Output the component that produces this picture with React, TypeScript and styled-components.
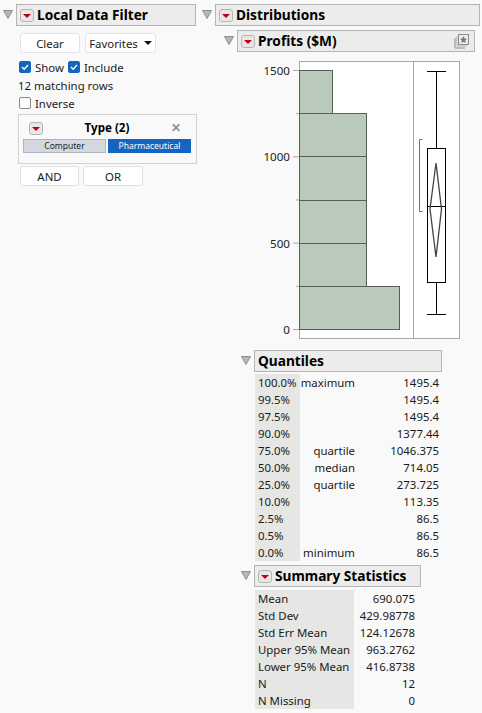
import { Fragment } from 'react';
import styled, { createGlobalStyle } from 'styled-components';

const GlobalStyle = createGlobalStyle`
    html, body {
        margin: 0;
        padding: 0;
        background: #f9f9f9;
    }
    body {
        font-family: "Noto Sans", "Open Sans", sans-serif;
        font-size: 11.4px;
        color: #1a1a1a;
    }
`;

const quantiles = [
    ['100.0%', 'maximum', '1495.4'],
    ['99.5%', '', '1495.4'],
    ['97.5%', '', '1495.4'],
    ['90.0%', '', '1377.44'],
    ['75.0%', 'quartile', '1046.375'],
    ['50.0%', 'median', '714.05'],
    ['25.0%', 'quartile', '273.725'],
    ['10.0%', '', '113.35'],
    ['2.5%', '', '86.5'],
    ['0.5%', '', '86.5'],
    ['0.0%', 'minimum', '86.5'],
];

const summary = [
    ['Mean', '690.075'],
    ['Std Dev', '429.98778'],
    ['Std Err Mean', '124.12678'],
    ['Upper 95% Mean', '963.2762'],
    ['Lower 95% Mean', '416.8738'],
    ['N', '12'],
    ['N Missing', '0'],
];

const Page = styled.div`
    display: flex;
    width: 482px;
    height: 713px;
    overflow: hidden;
    padding-top: 4px;
    box-sizing: border-box;
`;

const LeftColumn = styled.div`
    width: 202px;
    padding-left: 3px;
    box-sizing: border-box;
    flex: none;
`;

const RightColumn = styled.div`
    flex: 1;
    min-width: 0;
`;

const OutlineRow = styled.div<{ $indent?: number; $width: number }>`
    display: flex;
    align-items: flex-start;
    gap: 3px;
    margin-left: ${props => props.$indent || 0}px;
    width: ${props => props.$width}px;
    height: 22px;
`;

const Header = styled.div`
    flex: 1;
    height: 100%;
    display: flex;
    align-items: center;
    gap: 3px;
    padding: 0 4px 2px 3px;
    box-sizing: border-box;
    background: #ececec;
    border: 1px solid #b4b4b4;
    font-size: 13.7px;
    font-weight: 700;
    color: #000;
    white-space: nowrap;
`;

const HeaderTitle = styled.span`
    flex: 1;
`;

const Disclosure = () => (
    <svg width="10" height="9" viewBox="0 0 10 9" style={{ marginTop: 6, flex: 'none' }}>
        <path d="M0.5 0.5H9.5L5 8.5Z" fill="#b8b8b8" stroke="#8e8e8e" />
    </svg>
);

const RedMenu = () => (
    <svg width="14" height="13" viewBox="0 0 14 13" style={{ flex: 'none', marginTop: 2 }}>
        <rect x="0.5" y="0.5" width="13" height="12" rx="2.5" fill="#ebe6e6" stroke="#b9b4b4" />
        <path d="M3 5H11L7 9Z" fill="#c00018" />
    </svg>
);

const StarBadge = () => (
    <svg width="16" height="16" viewBox="0 0 16 16" style={{ marginTop: 2 }}>
        <path d="M1 5V15H11" fill="none" stroke="#8c8c8c" strokeWidth="1" />
        <path d="M3 3V13H13" fill="none" stroke="#b5b5b5" strokeWidth="1" />
        <rect x="4.5" y="1.5" width="10" height="10" fill="#ececec" stroke="#8c8c8c" />
        <path d="M9.5 3L10.6 5.5L13 5.8L11.2 7.5L11.7 10L9.5 8.7L7.3 10L7.8 7.5L6 5.8L8.4 5.5Z" fill="#777" />
    </svg>
);

const FilterBody = styled.div`
    padding: 7px 0 0 15px;
`;

const ButtonRow = styled.div<{ $gap: number; $left: number }>`
    display: flex;
    gap: ${props => props.$gap}px;
    margin-left: ${props => props.$left}px;
`;

const Button = styled.button<{ $width: number }>`
    width: ${props => props.$width}px;
    height: 20px;
    padding: 0;
    display: flex;
    align-items: center;
    justify-content: center;
    gap: 6px;
    font: inherit;
    color: #1a1a1a;
    background: #fff;
    border: 1px solid #e2e2e2;
    border-radius: 3px;
`;

const Caret = styled.span`
    width: 0;
    height: 0;
    border-left: 4px solid transparent;
    border-right: 4px solid transparent;
    border-top: 4px solid #111;
`;

const CheckRow = styled.div`
    display: flex;
    align-items: center;
    height: 18px;
    margin: 5px 0 0 1px;
`;

const CheckLabel = styled.span`
    margin: 0 4px 0 4px;
`;

const Box = styled.span<{ $checked?: boolean }>`
    width: 12px;
    height: 12px;
    box-sizing: border-box;
    display: inline-flex;
    align-items: center;
    justify-content: center;
    border-radius: 2px;
    background: ${props => (props.$checked ? '#1565c0' : '#fbfbfb')};
    border: 1px solid ${props => (props.$checked ? '#1565c0' : '#8a8a8a')};
`;

const Check = () => (
    <svg width="10" height="10" viewBox="0 0 10 10">
        <path d="M2 5L4.2 7.2L8 3" fill="none" stroke="#fff" strokeWidth="1.3" />
    </svg>
);

const MatchRows = styled.div`
    height: 18px;
    line-height: 18px;
    margin-top: 1px;
`;

const InverseRow = styled(CheckRow)`
    margin-top: -1px;
`;

const TypePanel = styled.div`
    width: 179px;
    height: 50px;
    margin-top: 2px;
    box-sizing: border-box;
    border: 1px solid #d2d2d2;
    padding: 5px 5px 0 4px;
`;

const TypeHead = styled.div`
    display: flex;
    align-items: center;
    padding-left: 6px;
    height: 14px;
`;

const TypeTitle = styled.span`
    flex: 1;
    text-align: center;
    font-weight: 700;
    font-size: 11.6px;
    color: #000;
`;

const Close = styled.span`
    width: 20px;
    font-size: 12px;
    font-weight: 700;
    color: #909090;
`;

const Levels = styled.div`
    display: flex;
    gap: 2px;
    margin-top: 5px;
`;

const Level = styled.div<{ $selected?: boolean }>`
    flex: 1;
    height: 14px;
    line-height: 12px;
    box-sizing: border-box;
    text-align: center;
    font-size: 8.5px;
    color: ${props => (props.$selected ? '#fff' : '#222')};
    background: ${props => (props.$selected ? '#1565c0' : '#d3d8e0')};
    border: 1px solid ${props => (props.$selected ? '#1565c0' : '#b0b5bd')};
`;

const LogicRow = styled(ButtonRow)`
    margin-top: 2px;
`;

const PlotFrame = styled.div`
    margin: 6px 0 0 42px;
`;

const Section = styled.div`
    margin-left: 39px;
`;

const Rows = styled.div<{ $columns: string; $top: number }>`
    display: grid;
    grid-template-columns: ${props => props.$columns};
    grid-auto-rows: 17px;
    line-height: 17px;
    margin: ${props => props.$top}px 0 0 14px;
    white-space: nowrap;
`;

const LabelCell = styled.div`
    background: #e6e6e4;
    padding-left: 3px;
`;

const MidCell = styled.div`
    text-align: right;
`;

const ValueCell = styled.div`
    text-align: right;
`;

const QuantileHead = styled(OutlineRow)`
    margin-top: 7px;
`;

const SummaryHead = styled(OutlineRow)`
    margin-top: 4px;
`;

const ProfitsHead = styled(OutlineRow)`
    margin-top: 4px;
`;

const y = (v: number) => 329.5 - v * 0.1727;

const Plot = () => (
    <svg width="230" height="285" viewBox="244 58 230 285" style={{ display: 'block' }}>
        <rect x="299.5" y="61.5" width="160" height="277" fill="#fff" stroke="#a8a8a8" />
        <line x1="413.5" y1="61" x2="413.5" y2="338" stroke="#a8a8a8" />
        {[1500, 1000, 500, 0].map(v => (
            <g key={v}>
                <line x1="293" x2="299" y1={y(v)} y2={y(v)} stroke="#a8a8a8" />
                <text x="290" y={y(v) + 4.5} textAnchor="end" fontSize="11.6" fill="#222">{v}</text>
            </g>
        ))}
        {[1250, 750, 250].map(v => (
            <line key={v} x1="296" x2="299" y1={y(v)} y2={y(v)} stroke="#a8a8a8" />
        ))}
        <g fill="#b9c9ba" stroke="#556055">
            <rect x="299.5" y="70.5" width="33" height="43" />
            <rect x="299.5" y="113.5" width="67" height="173" />
            <rect x="299.5" y="286.5" width="100" height="43" />
        </g>
        <g stroke="#556055">
            <line x1="300" x2="366" y1="156.5" y2="156.5" />
            <line x1="300" x2="366" y1="200.5" y2="200.5" />
            <line x1="300" x2="366" y1="243.5" y2="243.5" />
        </g>
        <path d="M422.5 139.5H419.5V211.5H422.5" fill="none" stroke="#c8475f" />
        <g stroke="#000" fill="none">
            <line x1="427" x2="446" y1="71.5" y2="71.5" />
            <line x1="436.5" x2="436.5" y1="71.5" y2="148.5" />
            <rect x="427.5" y="148.5" width="18" height="134" />
            <line x1="428" x2="445" y1="206.5" y2="206.5" />
            <line x1="436.5" x2="436.5" y1="282.5" y2="314.5" />
            <line x1="427" x2="446" y1="314.5" y2="314.5" />
        </g>
        <path d="M436 163L441.5 209L436 257L430 209Z" fill="none" stroke="#444" strokeWidth="1.3" />
    </svg>
);

export default function App() {
    return (
        <Page>
            <GlobalStyle />
            <LeftColumn>
                <OutlineRow $width={193}>
                    <Disclosure />
                    <Header>
                        <RedMenu />
                        <HeaderTitle>Local Data Filter</HeaderTitle>
                    </Header>
                </OutlineRow>
                <FilterBody>
                    <ButtonRow $gap={5} $left={2}>
                        <Button $width={60}>Clear</Button>
                        <Button $width={71}>Favorites <Caret /></Button>
                    </ButtonRow>
                    <CheckRow>
                        <Box $checked><Check /></Box>
                        <CheckLabel>Show</CheckLabel>
                        <Box $checked><Check /></Box>
                        <CheckLabel>Include</CheckLabel>
                    </CheckRow>
                    <MatchRows>12 matching rows</MatchRows>
                    <InverseRow>
                        <Box />
                        <CheckLabel>Inverse</CheckLabel>
                    </InverseRow>
                    <TypePanel>
                        <TypeHead>
                            <RedMenu />
                            <TypeTitle>Type (2)</TypeTitle>
                            <Close>✕</Close>
                        </TypeHead>
                        <Levels>
                            <Level>Computer</Level>
                            <Level $selected>Pharmaceutical</Level>
                        </Levels>
                    </TypePanel>
                    <LogicRow $gap={4} $left={2}>
                        <Button $width={59}>AND</Button>
                        <Button $width={60}>OR</Button>
                    </LogicRow>
                </FilterBody>
            </LeftColumn>
            <RightColumn>
                <OutlineRow $width={278}>
                    <Disclosure />
                    <Header>
                        <RedMenu />
                        <HeaderTitle>Distributions</HeaderTitle>
                    </Header>
                </OutlineRow>
                <ProfitsHead $indent={22} $width={251}>
                    <Disclosure />
                    <Header>
                        <RedMenu />
                        <HeaderTitle>Profits ($M)</HeaderTitle>
                        <StarBadge />
                    </Header>
                </ProfitsHead>
                <PlotFrame>
                    <Plot />
                </PlotFrame>
                <Section>
                    <QuantileHead $width={201}>
                        <Disclosure />
                        <Header>
                            <HeaderTitle>Quantiles</HeaderTitle>
                        </Header>
                    </QuantileHead>
                    <Rows $columns="45px 55px 84px" $top={2}>
                        {quantiles.map(row => (
                            <Fragment key={row[0]}>
                                <LabelCell>{row[0]}</LabelCell>
                                <MidCell>{row[1]}</MidCell>
                                <ValueCell>{row[2]}</ValueCell>
                            </Fragment>
                        ))}
                    </Rows>
                    <SummaryHead $width={180}>
                        <Disclosure />
                        <Header>
                            <RedMenu />
                            <HeaderTitle>Summary Statistics</HeaderTitle>
                        </Header>
                    </SummaryHead>
                    <Rows $columns="99px 61px" $top={3}>
                        {summary.map(row => (
                            <Fragment key={row[0]}>
                                <LabelCell>{row[0]}</LabelCell>
                                <ValueCell>{row[1]}</ValueCell>
                            </Fragment>
                        ))}
                    </Rows>
                </Section>
            </RightColumn>
        </Page>
    );
}
